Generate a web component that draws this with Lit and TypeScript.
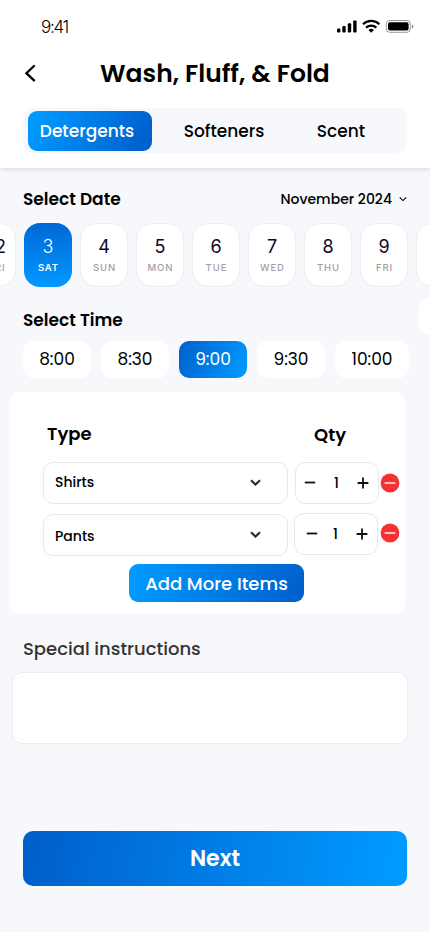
import { LitElement, html, css, svg } from "lit";
import { customElement, property, state } from "lit/decorators.js";
import { classMap } from "lit/directives/class-map.js";

const FONT = css`Poppins, Inter, "Liberation Sans", sans-serif`;

@customElement("status-bar")
class StatusBar extends LitElement {
  static styles = css`
    :host { display: flex; justify-content: space-between; height: 54px; padding: 0 16px 0 41px; box-sizing: border-box; }
    .time { margin-top: 17px; font: 300 17px/20px Inter, sans-serif; letter-spacing: -1.3px; color: #000; }
    .icons { margin-top: 19px; width: 77px; height: 15px; }
  `;
  render() {
    return html`
      <span class="time">9:41</span>
      <svg class="icons" viewBox="337 19 77 15">
        <rect x="337" y="28.4" width="3.4" height="4.2" rx="1"></rect>
        <rect x="342.3" y="26" width="3.4" height="6.6" rx="1"></rect>
        <rect x="347.8" y="23.2" width="3.4" height="9.4" rx="1"></rect>
        <rect x="353.2" y="20.4" width="3.4" height="12.2" rx="1"></rect>
        <g fill="none" stroke="#000" stroke-width="2.2">
          <path d="M363 24.2a12 12 0 0 1 16.4 0"></path>
          <path d="M366 27.6a7.6 7.6 0 0 1 10.4 0"></path>
        </g>
        <path d="M368.5 30a4 4 0 0 1 5.4 0l-2.7 2.7z"></path>
        <rect x="386.3" y="20.5" width="24" height="11.8" rx="3.4" fill="none" stroke="#000" stroke-opacity=".4"></rect>
        <rect x="388" y="22.2" width="20.6" height="8.4" rx="2"></rect>
        <path d="M411.9 24.4v4q1.5-.6 1.5-2t-1.5-2z" fill-opacity=".45"></path>
      </svg>
    `;
  }
}

@customElement("qty-stepper")
class QtyStepper extends LitElement {
  @property({ type: Number }) value = 1;
  static styles = css`
    :host { display: flex; align-items: center; justify-content: space-between; box-sizing: border-box;
      width: 84px; height: 42px; padding: 0 9px 0 8px; border: 1px solid #e9e9e9; border-radius: 10px; background: #fff; }
    .num { font: 500 14px/20px ${FONT}; color: #000; margin-right: var(--num-nudge, 0px); }
    svg { display: block; width: 12px; height: 12px; fill: none; stroke: #111; stroke-width: 1.8; }
  `;
  render() {
    return html`
      <svg viewBox="0 0 12 12"><path d="M.8 5.5h10.4"></path></svg>
      <span class="num">${this.value}</span>
      <svg viewBox="0 0 12 12"><path d="M.6 6h10.8M6 .6v10.8"></path></svg>
    `;
  }
}

const chevron = svg`<path d="M1 1.2 5.5 5.6 10 1.2"></path>`;

@customElement("app-root")
class AppRoot extends LitElement {
  @state() private day = 3;
  @state() private slot_ = "9:00";
  private days: [number | string, string][] = [
    [2, "FRI"], [3, "SAT"], [4, "SUN"], [5, "MON"], [6, "TUE"], [7, "WED"], [8, "THU"], [9, "FRI"], ["", ""],
  ];
  private slots = ["8:00", "8:30", "9:00", "9:30", "10:00"];

  static styles = css`
    :host { display: flex; flex-direction: column; position: relative; width: 430px; height: 932px; overflow: hidden;
      background: #f7f8fc; color: #000; font-family: ${FONT}; }
    * { box-sizing: border-box; }
    svg { display: block; flex: none; fill: none; }
    header { height: 168px; flex: none; background: #fff; box-shadow: 0 1px 5px rgba(40, 40, 70, 0.16); }
    .title-row { display: flex; align-items: center; height: 38px; padding-left: 24px; }
    .back { width: 12px; height: 18px; stroke: #000; stroke-width: 2.3; stroke-linecap: round; }
    h1 { margin: 2px 0 0 64px; font-size: 25px; line-height: 38px; font-weight: 600; white-space: nowrap; letter-spacing: 0; }
    .tabs { display: flex; margin: 16px 23px 0; width: 384px; height: 45px; padding: 3px 5px 2px; border-radius: 10px; background: #f7f8fc; }
    .tab { display: flex; align-items: center; justify-content: center; height: 40px; font-size: 17px; font-weight: 500; border-radius: 9px; }
    .tab.first { width: 124px; padding-right: 6px; color: #fff; background: linear-gradient(115deg, #0099ff 8%, #0060cc 92%); }
    .tab.second { width: 144px; }
    .tab.third { width: 90px; }
    .section { display: flex; justify-content: space-between; align-items: center; height: 26px; padding: 0 23px; }
    .date-head { margin-top: 18px; }
    h2 { margin: 0; font-size: 17px; line-height: 26px; font-weight: 600; letter-spacing: 0; }
    .month { display: flex; align-items: center; gap: 7px; font-size: 14px; font-weight: 500; line-height: 26px; }
    .month svg { width: 8px; height: 6px; stroke: #000; stroke-width: 1.5; }
    .days { display: flex; flex: none; gap: 8px; margin: 11px 0 0 -32px; width: 504px; }
    .day { flex: none; display: flex; flex-direction: column; align-items: center; width: 48px; height: 64px; padding-top: 11px;
      border: 1px solid #ededf3; border-radius: 16px; background: #fff; }
    .day b { font: 400 18px/24px Inter, sans-serif; color: #0d0827; }
    .day i { margin-top: 2px; font: 500 9.5px/14px Inter, sans-serif; letter-spacing: 0.9px; margin-right: -0.9px; color: #a0a0a5; }
    .day:first-child b { margin-left: 17px; }
    .day:first-child i { margin-left: 9px; }
    .day.on { border: 0; padding-top: 12px; background: linear-gradient(180deg, #0068d6, #0099ff); }
    .day.on b { color: #fff; font-weight: 300; }
    .day.on i { color: #fff; font-weight: 600; }
    .time-head { margin-top: 20px; }
    .slots { display: flex; flex: none; gap: 10px; margin: 8px 0 0 23px; }
    .slot { width: 68px; height: 37px; border-radius: 10px; background: #fff; text-align: center; font-size: 17px; line-height: 36px; }
    .slot:last-child { width: 74px; }
    .slot.on { color: #fff; background: linear-gradient(115deg, #0060cc 0%, #0099ff 95%); }
    .next-slot { position: absolute; left: 419px; top: 298px; width: 68px; height: 37px; border-radius: 10px; background: #fff; }
    .card { flex: none; margin: 14px 0 0 9px; width: 396px; height: 222px; border-radius: 10px; background: #fff; padding: 29px 5px 0 34px; }
    .cols { display: flex; height: 41px; padding-left: 4px; }
    .cols h3 { margin: 0; font-size: 18px; line-height: 26px; font-weight: 600; }
    .cols .type { width: 267px; }
    .cols .qty { margin-top: 1px; }
    .item { display: flex; align-items: center; height: 42px; margin-bottom: 10px; }
    .select { display: flex; align-items: center; justify-content: space-between; width: 245px; height: 42px; padding: 0 26px 2px 11px;
      border: 1px solid #e9e9e9; border-radius: 10px; font-size: 14px; font-weight: 500; }
    .select svg { width: 11px; height: 7px; stroke: #2c2c2c; stroke-width: 2.1; }
    .item qty-stepper { margin-left: 7px; }
    .remove { width: 20px; height: 20px; margin-left: 1px; }
    .item.alt .select span { padding-top: 4px; }
    .item.alt qty-stepper { margin: -2px 0 0 6px; padding-left: 11px; --num-nudge: 3px; }
    .item.alt .remove { margin: -4px 0 0 2px; }
    .add { display: flex; align-items: center; justify-content: center; margin: -2px 0 0 86px; width: 175px; height: 38px; border-radius: 9px; color: #fff;
      font-size: 18px; font-weight: 500; background: linear-gradient(105deg, #0099ff 5%, #0060cc 97%); }
    .note-label { margin: 22px 0 0 23px; font-size: 18px; line-height: 26px; font-weight: 500; color: #333; }
    .note { flex: none; margin: 10px 0 0 12px; width: 396px; height: 72px; border: 1px solid #ececec; border-radius: 10px; background: #fff; }
    .next { flex: none; margin: 87px 0 0 23px; width: 384px; height: 55px; border-radius: 10px; color: #fff; text-align: center;
      font-size: 22px; line-height: 56px; font-weight: 600; background: linear-gradient(98deg, #0060cc 3%, #0099ff 95%); }
  `;

  private item(name: string, alt: boolean) {
    return html`
      <div class=${classMap({ item: true, alt })}>
        <div class="select"><span>${name}</span><svg viewBox="0 0 11 7">${chevron}</svg></div>
        <qty-stepper .value=${1}></qty-stepper>
        <svg class="remove" viewBox="0 0 20 20">
          <circle cx="10" cy="10" r="9.4" fill="#f53131"></circle>
          <path d="M4.6 10h10.8" stroke="#fff" stroke-width="1.4"></path>
        </svg>
      </div>
    `;
  }

  render() {
    return html`
      <header>
        <status-bar></status-bar>
        <div class="title-row">
          <svg class="back" viewBox="0 0 12 18"><path d="M10 2 2.4 9.2 10 16.4"></path></svg>
          <h1><span>Wash, Fluff, &amp; Fold</span></h1>
        </div>
        <div class="tabs">
          <div class="tab first">Detergents</div>
          <div class="tab second">Softeners</div>
          <div class="tab third">Scent</div>
        </div>
      </header>
      <div class="section date-head">
        <h2>Select Date</h2>
        <div class="month"><span>November 2024</span><svg viewBox="0 0 11 7">${chevron}</svg></div>
      </div>
      <div class="days">
        ${this.days.map(([n, d]) => html`
          <div class=${classMap({ day: true, on: n === this.day })} @click=${() => (this.day = Number(n))}><b>${n}</b><i>${d}</i></div>`)}
      </div>
      <div class="section time-head"><h2>Select Time</h2></div>
      <div class="slots">
        ${this.slots.map((t) => html`
          <div class=${classMap({ slot: true, on: t === this.slot_ })} @click=${() => (this.slot_ = t)}>${t}</div>`)}
      </div>
      <div class="next-slot"></div>
      <div class="card">
        <div class="cols"><h3 class="type">Type</h3><h3 class="qty">Qty</h3></div>
        ${this.item("Shirts", false)} ${this.item("Pants", true)}
        <div class="add"><span>Add More Items</span></div>
      </div>
      <div class="note-label"><span>Special instructions</span></div>
      <div class="note"></div>
      <div class="next"><span>Next</span></div>
    `;
  }
}
